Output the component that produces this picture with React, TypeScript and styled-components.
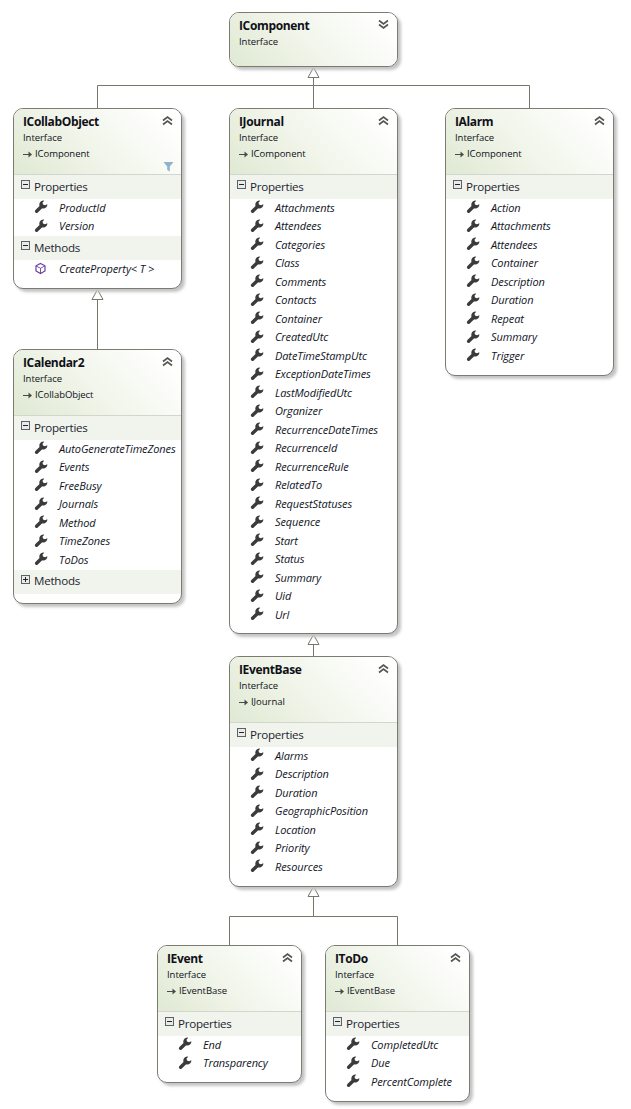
import React from "react";
import styled, { createGlobalStyle } from "styled-components";

const Global = createGlobalStyle`
  html, body { margin: 0; padding: 0; background: #fff; }
  body { font-family: "Open Sans", "Noto Sans", "Liberation Sans", sans-serif; }
`;

const Canvas = styled.div`
  position: relative;
  width: 631px;
  height: 1109px;
  overflow: hidden;
  background: #fff;
`;

const Wires = styled.svg`
  position: absolute;
  left: 0;
  top: 0;
`;

const Card = styled.section<{ $x: number; $y: number; $w: number; $h: number }>`
  position: absolute;
  left: ${(p) => p.$x}px;
  top: ${(p) => p.$y}px;
  width: ${(p) => p.$w}px;
  height: ${(p) => p.$h}px;
  box-sizing: border-box;
  border: 1px solid #7b7b72;
  border-radius: 10px;
  background: #fff;
  box-shadow: 3px 3px 3px #c4c4c4;
  overflow: hidden;
  color: #101018;
`;

const Header = styled.header<{ $h: number; $rule: boolean }>`
  position: relative;
  height: ${(p) => p.$h}px;
  box-sizing: border-box;
  padding: 4px 9px 0 9px;
  background: linear-gradient(45deg, #dfe9d3 0%, #f1f5ea 45%, #ffffff 90%);
  border-bottom: ${(p) => (p.$rule ? "1px solid #d3d6cf" : "none")};
`;

const Title = styled.h2`
  margin: 0;
  font-size: 12px;
  font-weight: 700;
  line-height: 18px;
  letter-spacing: -0.35px;
`;

const Kind = styled.div`
  font-size: 9.5px;
  line-height: 14px;
  letter-spacing: -0.05px;
`;

const Base = styled.div`
  display: flex;
  align-items: center;
  gap: 1px;
  font-size: 9.5px;
  line-height: 16px;
  letter-spacing: -0.05px;
  margin-top: 1px;
`;

const Toggle = styled.svg`
  position: absolute;
  right: 8px;
  top: 6px;
`;

const Funnel = styled.svg`
  position: absolute;
  right: 7px;
  bottom: 2px;
`;

const Band = styled.div`
  display: flex;
  align-items: center;
  height: 24px;
  box-sizing: border-box;
  padding: 0 0 2px 7px;
  background: #f1f4ed;
  font-size: 11.6px;
  letter-spacing: -0.25px;
  gap: 4px;
  color: #1c2430;
`;

const BoxIcon = styled.svg`
  margin-top: -3px;
`;

const Rows = styled.ul`
  list-style: none;
  margin: -1px 0 0 0;
  padding: 0 0 1px 0;
`;

const Row = styled.li`
  display: flex;
  align-items: center;
  height: 18.5px;
  padding-left: 20px;
  font-size: 11px;
  font-style: italic;
  letter-spacing: -0.1px;
  color: #10141e;
`;

const IconSlot = styled.span`
  display: inline-flex;
  width: 25px;
  flex: none;
`;

const Wrench = () => (
  <svg width="14" height="14" viewBox="0 0 14 14">
    <path
      d="M10.200 0.700A4 4 0 1 0 13.300 4.300L11 5.300 9 4.600 8.500 2.700z"
      fill="#3b3b3b"
    />
    <path d="M7 7L2.600 11.300" stroke="#3b3b3b" strokeWidth="3.400" strokeLinecap="round" />
  </svg>
);

const Cube = () => (
  <svg width="13" height="13" viewBox="0 0 13 13" fill="none" stroke="#6a3fa0" strokeWidth="1.2">
    <path d="M6.500 1.500l4.500 2.300v5.200l-4.500 2.500L2 9V3.800z" />
    <path d="M2 3.800l4.500 2.500L11 3.800M6.500 6.300v5.200" strokeWidth="0.9" />
  </svg>
);

const Chevrons = ({ down }: { down?: boolean }) => (
  <Toggle width="11" height="11" viewBox="0 0 11 11" fill="none" stroke="#55584f" strokeWidth="1.7">
    {down ? (
      <path d="M1 1.500l4.500 3.500L10 1.500M1 5.500L5.500 9 10 5.500" />
    ) : (
      <path d="M1 5.500L5.500 2 10 5.500M1 9.500L5.500 6 10 9.500" />
    )}
  </Toggle>
);

const Box = ({ open }: { open: boolean }) => (
  <BoxIcon width="9" height="9" viewBox="0 0 9 9">
    <rect x="0.500" y="0.500" width="8" height="8" fill="#e9ebe6" stroke="#5c6068" />
    <path d={open ? "M2 4.500h5" : "M2 4.500h5M4.500 2v5"} stroke="#20242c" strokeWidth="1" />
  </BoxIcon>
);

const Implements = () => (
  <svg width="11" height="9" viewBox="0 0 11 9" fill="none">
    <path d="M0 4.500h8" stroke="#4a4a4a" strokeWidth="1.200" />
    <path d="M5.500 1.500L9 4.500 5.500 7.500z" fill="#4a4a4a" />
  </svg>
);

type Member = { name: string; method?: boolean };
type Group = { label: string; open: boolean; items: Member[] };
type Node = {
  name: string;
  base?: string;
  x: number;
  y: number;
  w: number;
  h: number;
  collapsed?: boolean;
  filtered?: boolean;
  groups: Group[];
};

const props = (s: string): Member[] => s.split(" ").map((name) => ({ name }));

const nodes: Node[] = [
  { name: "IComponent", x: 229, y: 12, w: 169, h: 55, collapsed: true, groups: [] },
  {
    name: "ICollabObject", base: "IComponent", x: 13, y: 108, w: 169, h: 181, filtered: true,
    groups: [
      { label: "Properties", open: true, items: props("ProductId Version") },
      { label: "Methods", open: true, items: [{ name: "CreateProperty< T >", method: true }] },
    ],
  },
  {
    name: "IJournal", base: "IComponent", x: 229, y: 108, w: 169, h: 526,
    groups: [{
      label: "Properties", open: true,
      items: props("Attachments Attendees Categories Class Comments Contacts Container CreatedUtc DateTimeStampUtc ExceptionDateTimes LastModifiedUtc Organizer RecurrenceDateTimes RecurrenceId RecurrenceRule RelatedTo RequestStatuses Sequence Start Status Summary Uid Url"),
    }],
  },
  {
    name: "IAlarm", base: "IComponent", x: 445, y: 108, w: 169, h: 268,
    groups: [{ label: "Properties", open: true, items: props("Action Attachments Attendees Container Description Duration Repeat Summary Trigger") }],
  },
  {
    name: "ICalendar2", base: "ICollabObject", x: 13, y: 349, w: 169, h: 255,
    groups: [
      { label: "Properties", open: true, items: props("AutoGenerateTimeZones Events FreeBusy Journals Method TimeZones ToDos") },
      { label: "Methods", open: false, items: [] },
    ],
  },
  {
    name: "IEventBase", base: "IJournal", x: 229, y: 656, w: 169, h: 231,
    groups: [{ label: "Properties", open: true, items: props("Alarms Description Duration GeographicPosition Location Priority Resources") }],
  },
  {
    name: "IEvent", base: "IEventBase", x: 157, y: 945, w: 145, h: 138,
    groups: [{ label: "Properties", open: true, items: props("End Transparency") }],
  },
  {
    name: "IToDo", base: "IEventBase", x: 325, y: 945, w: 145, h: 157,
    groups: [{ label: "Properties", open: true, items: props("CompletedUtc Due PercentComplete") }],
  },
];

const line = "#77776c";

const Triangle = ({ x, y }: { x: number; y: number }) => (
  <path d={`M${x + 0.5} ${y + 0.5}L${x - 5} ${y + 10.5}H${x + 6}Z`} fill="#fff" stroke={line} />
);

export default function App() {
  return (
    <Canvas>
      <Global />
      <Wires width="631" height="1109" fill="none" stroke={line}>
        <path d="M97.500 108V85.500H529.500V108M313.500 78V108" />
        <path d="M97.500 300V349M313.500 645V656M313.500 896V916.500M229.500 945V916.500H397.500V945" />
        <Triangle x={313} y={67} />
        <Triangle x={97} y={289} />
        <Triangle x={313} y={634} />
        <Triangle x={313} y={886} />
      </Wires>
      {nodes.map((n) => (
        <Card key={n.name} $x={n.x} $y={n.y} $w={n.w} $h={n.h}>
          <Header $h={n.collapsed ? 53 : 66} $rule={!n.collapsed}>
            <Title>{n.name}</Title>
            <Kind>Interface</Kind>
            {n.base && (
              <Base>
                <Implements />
                {n.base}
              </Base>
            )}
            <Chevrons down={n.collapsed} />
            {n.filtered && (
              <Funnel width="11" height="11" viewBox="0 0 11 11">
                <path d="M0.500 1h10L6.800 5.500V10.500L4.200 9V5.500z" fill="#8fb3cf" />
              </Funnel>
            )}
          </Header>
          {n.groups.map((g) => (
            <React.Fragment key={g.label}>
              <Band>
                <Box open={g.open} />
                {g.label}
              </Band>
              {g.items.length > 0 && (
                <Rows>
                  {g.items.map((m) => (
                    <Row key={m.name}>
                      <IconSlot>{m.method ? <Cube /> : <Wrench />}</IconSlot>
                      {m.name}
                    </Row>
                  ))}
                </Rows>
              )}
            </React.Fragment>
          ))}
        </Card>
      ))}
    </Canvas>
  );
}
